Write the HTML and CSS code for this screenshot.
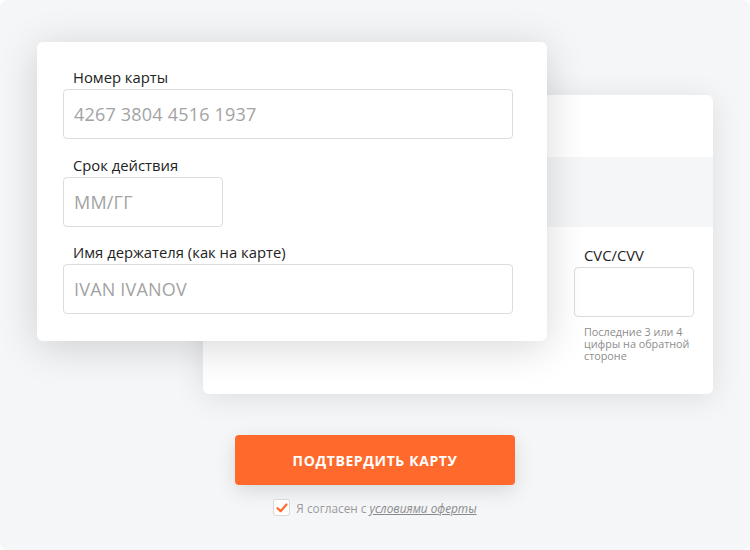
FILE: index.html
```html
<!DOCTYPE html>
<html lang="ru">
<head>
<meta charset="utf-8">
<link rel="stylesheet" href="styles.css">
</head>
<body>
<div class="page">
  <div class="cards">
    <div class="card card-back">
      <div class="stripe"></div>
      <div class="cvc">
        <div class="label">CVC/CVV</div>
        <div class="input input-cvc"></div>
        <div class="hint">Последние 3 или 4 цифры на обратной стороне</div>
      </div>
    </div>
    <div class="card card-front">
      <div class="field">
        <div class="label">Номер карты</div>
        <div class="input input-wide"><span class="ph">4267 3804 4516 1937</span></div>
      </div>
      <div class="field">
        <div class="label">Срок действия</div>
        <div class="input input-short"><span class="ph">ММ/ГГ</span></div>
      </div>
      <div class="field field-last">
        <div class="label">Имя держателя (как на карте)</div>
        <div class="input input-wide"><span class="ph">IVAN IVANOV</span></div>
      </div>
    </div>
  </div>
  <div class="actions">
    <button class="btn">ПОДТВЕРДИТЬ КАРТУ</button>
    <div class="agree">
      <span class="check"><svg width="12" height="10" viewBox="0 0 12 10"><path d="M1.5 5.2 L4.6 8.2 L10.5 1.5" fill="none" stroke="#ff6a2c" stroke-width="2.2" stroke-linecap="round" stroke-linejoin="round"/></svg></span>
      <span class="agree-text">Я согласен с <a class="link">условиями оферты</a></span>
    </div>
  </div>
</div>
</body>
</html>
```
FILE: styles.css
```css
* { box-sizing: border-box; }
html, body { margin: 0; padding: 0; background: #fff; }
body { font-family: "Open Sans", "Liberation Sans", sans-serif; color: #222; }
.page {
  width: 750px;
  height: 550px;
  background: #f5f6f8;
  border-radius: 8px;
  overflow: hidden;
}
.cards {
  display: grid;
  height: 394px;
}
.card {
  grid-area: 1 / 1;
  width: 510px;
  height: 299px;
  background: #fff;
  border-radius: 6px;
}
.card-back {
  margin: 95px 0 0 203px;
  box-shadow: 0 4px 30px rgba(0, 0, 0, 0.10);
  padding-top: 62px;
  display: flex;
  flex-direction: column;
}
.stripe {
  height: 70px;
  background: #f5f6f8;
}
.cvc {
  margin-left: 371px;
  width: 120px;
  padding-top: 18px;
}
.cvc .label {
  padding-left: 10px;
  margin-bottom: 2px;
  font-size: 14.8px;
}
.input-cvc { width: 120px; }
.hint {
  margin-top: 9px;
  padding-left: 10px;
  font-size: 10.8px;
  line-height: 12px;
  color: #8d8d8d;
}
.card-front {
  margin: 42px 0 0 37px;
  z-index: 1;
  box-shadow: 0 6px 40px rgba(0, 0, 0, 0.16);
  padding: 25px 0 0 26px;
  display: flex;
  flex-direction: column;
  gap: 16px;
}
.field { display: flex; flex-direction: column; }
.field-last { margin-top: -1px; }
.label {
  font-size: 14.8px;
  line-height: 20px;
  padding-left: 10px;
  margin-bottom: 2px;
  color: #222;
}
.input {
  height: 50px;
  border: 1px solid #dcdcdc;
  border-radius: 4px;
  background: #fff;
  display: flex;
  align-items: center;
  padding-left: 10px;
}
.input-wide { width: 450px; }
.input-short { width: 160px; }
.ph {
  font-size: 18px;
  color: #a3a3a3;
  letter-spacing: 0.2px;
}
.actions {
  display: flex;
  flex-direction: column;
  align-items: center;
  padding-top: 41px;
}
.btn {
  width: 280px;
  height: 50px;
  border: none;
  border-radius: 4px;
  background: #ff6a2c;
  color: #fff;
  font-family: "Open Sans", "Liberation Sans", sans-serif;
  font-weight: 700;
  font-size: 14px;
  letter-spacing: 0.6px;
  box-shadow: 0 6px 20px rgba(0, 0, 0, 0.12);
  padding: 0;
}
.agree {
  display: flex;
  align-items: center;
  gap: 6px;
  margin-top: 14px;
  font-size: 11.8px;
  color: #9a9a9a;
}
.check {
  width: 17px;
  height: 17px;
  border: 1px solid #d8d8d8;
  border-radius: 3px;
  background: #fff;
  display: flex;
  align-items: center;
  justify-content: center;
}
.link {
  font-style: italic;
  text-decoration: underline;
  color: #8a8a8a;
}
```
